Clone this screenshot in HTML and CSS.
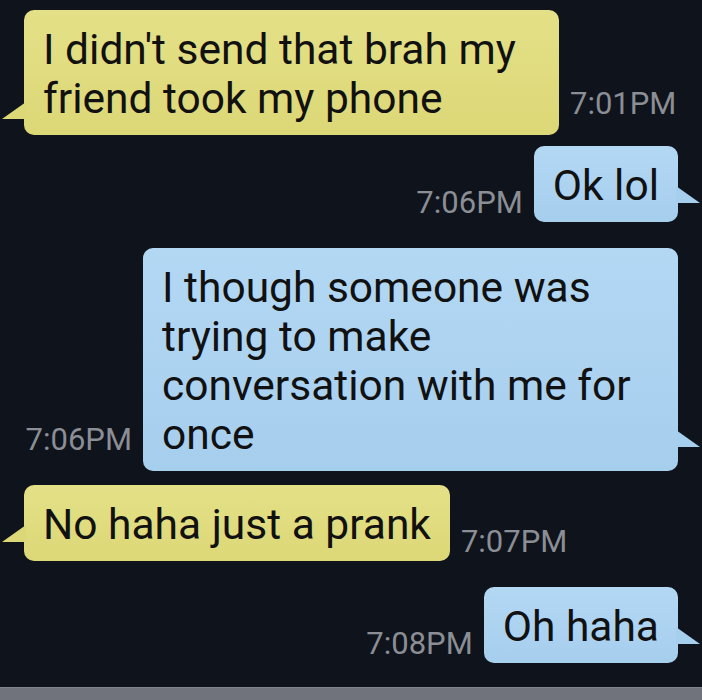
FILE: index.html
```html
<!DOCTYPE html>
<html>
<head>
<meta charset="utf-8">
<link rel="stylesheet" href="styles.css">
</head>
<body>
<div class="chat">
  <div class="row in r1">
    <div class="bubble yellow wide">I didn't send that brah my<br>friend took my phone</div>
    <div class="time multi">7:01PM</div>
  </div>
  <div class="row out r2">
    <div class="time">7:06PM</div>
    <div class="bubble blue">Ok lol</div>
  </div>
  <div class="row out r3">
    <div class="time multi">7:06PM</div>
    <div class="bubble blue wide">I though someone was<br>trying to make<br>conversation with me for<br>once</div>
  </div>
  <div class="row in r4">
    <div class="bubble yellow">No haha just a prank</div>
    <div class="time">7:07PM</div>
  </div>
  <div class="row out r5">
    <div class="time">7:08PM</div>
    <div class="bubble blue">Oh haha</div>
  </div>
</div>
<div class="bar"></div>
</body>
</html>
```

FILE: styles.css
```css
html, body {
  margin: 0;
  padding: 0;
  background: #0f131c;
}
body {
  width: 702px;
  height: 700px;
  overflow: hidden;
  display: flex;
  flex-direction: column;
}
.chat {
  height: 687px;
  padding: 10px 24px 0;
  box-sizing: border-box;
  display: flex;
  flex-direction: column;
}
.row {
  display: flex;
  align-items: flex-end;
  gap: 11px;
}
.row.out { justify-content: flex-end; }
.r2 { margin-top: 11px; }
.r3 { margin-top: 26px; }
.r4 { margin-top: 14px; }
.r5 { margin-top: 26px; }
.bubble {
  position: relative;
  font-family: Roboto, "Noto Sans", sans-serif;
  font-size: 42.5px;
  line-height: 49px;
  color: #111;
  padding: 15px 19px 12px 19px;
  border-radius: 10px;
  white-space: nowrap;
}
.bubble.wide {
  width: 535px;
  box-sizing: border-box;
}
.yellow {
  background: linear-gradient(#e4e087, #dcd877);
}
.blue {
  background: linear-gradient(#b3d8f4, #a6ceed);
}
.bubble::before {
  content: "";
  position: absolute;
  bottom: 19px;
  width: 24px;
  height: 17px;
}
.yellow::before {
  left: -22px;
  background: #dcd877;
  clip-path: polygon(100% 0, 100% 100%, 0 100%);
}
.blue::before {
  right: -22px;
  background: #a6ceed;
  clip-path: polygon(0 0, 100% 100%, 0 100%);
}
.r1 .bubble::before { bottom: 16px; }
.r3 .bubble::before { bottom: 24px; }
.time {
  font-family: Roboto, "Liberation Sans", sans-serif;
  font-size: 31px;
  line-height: 1;
  color: #8b8e94;
  margin-bottom: 4px;
  white-space: nowrap;
}
.time.multi { margin-bottom: 16px; }
.bar {
  flex: 1;
  background: #70737b;
  border-top: 1px solid #80838a;
}
```
